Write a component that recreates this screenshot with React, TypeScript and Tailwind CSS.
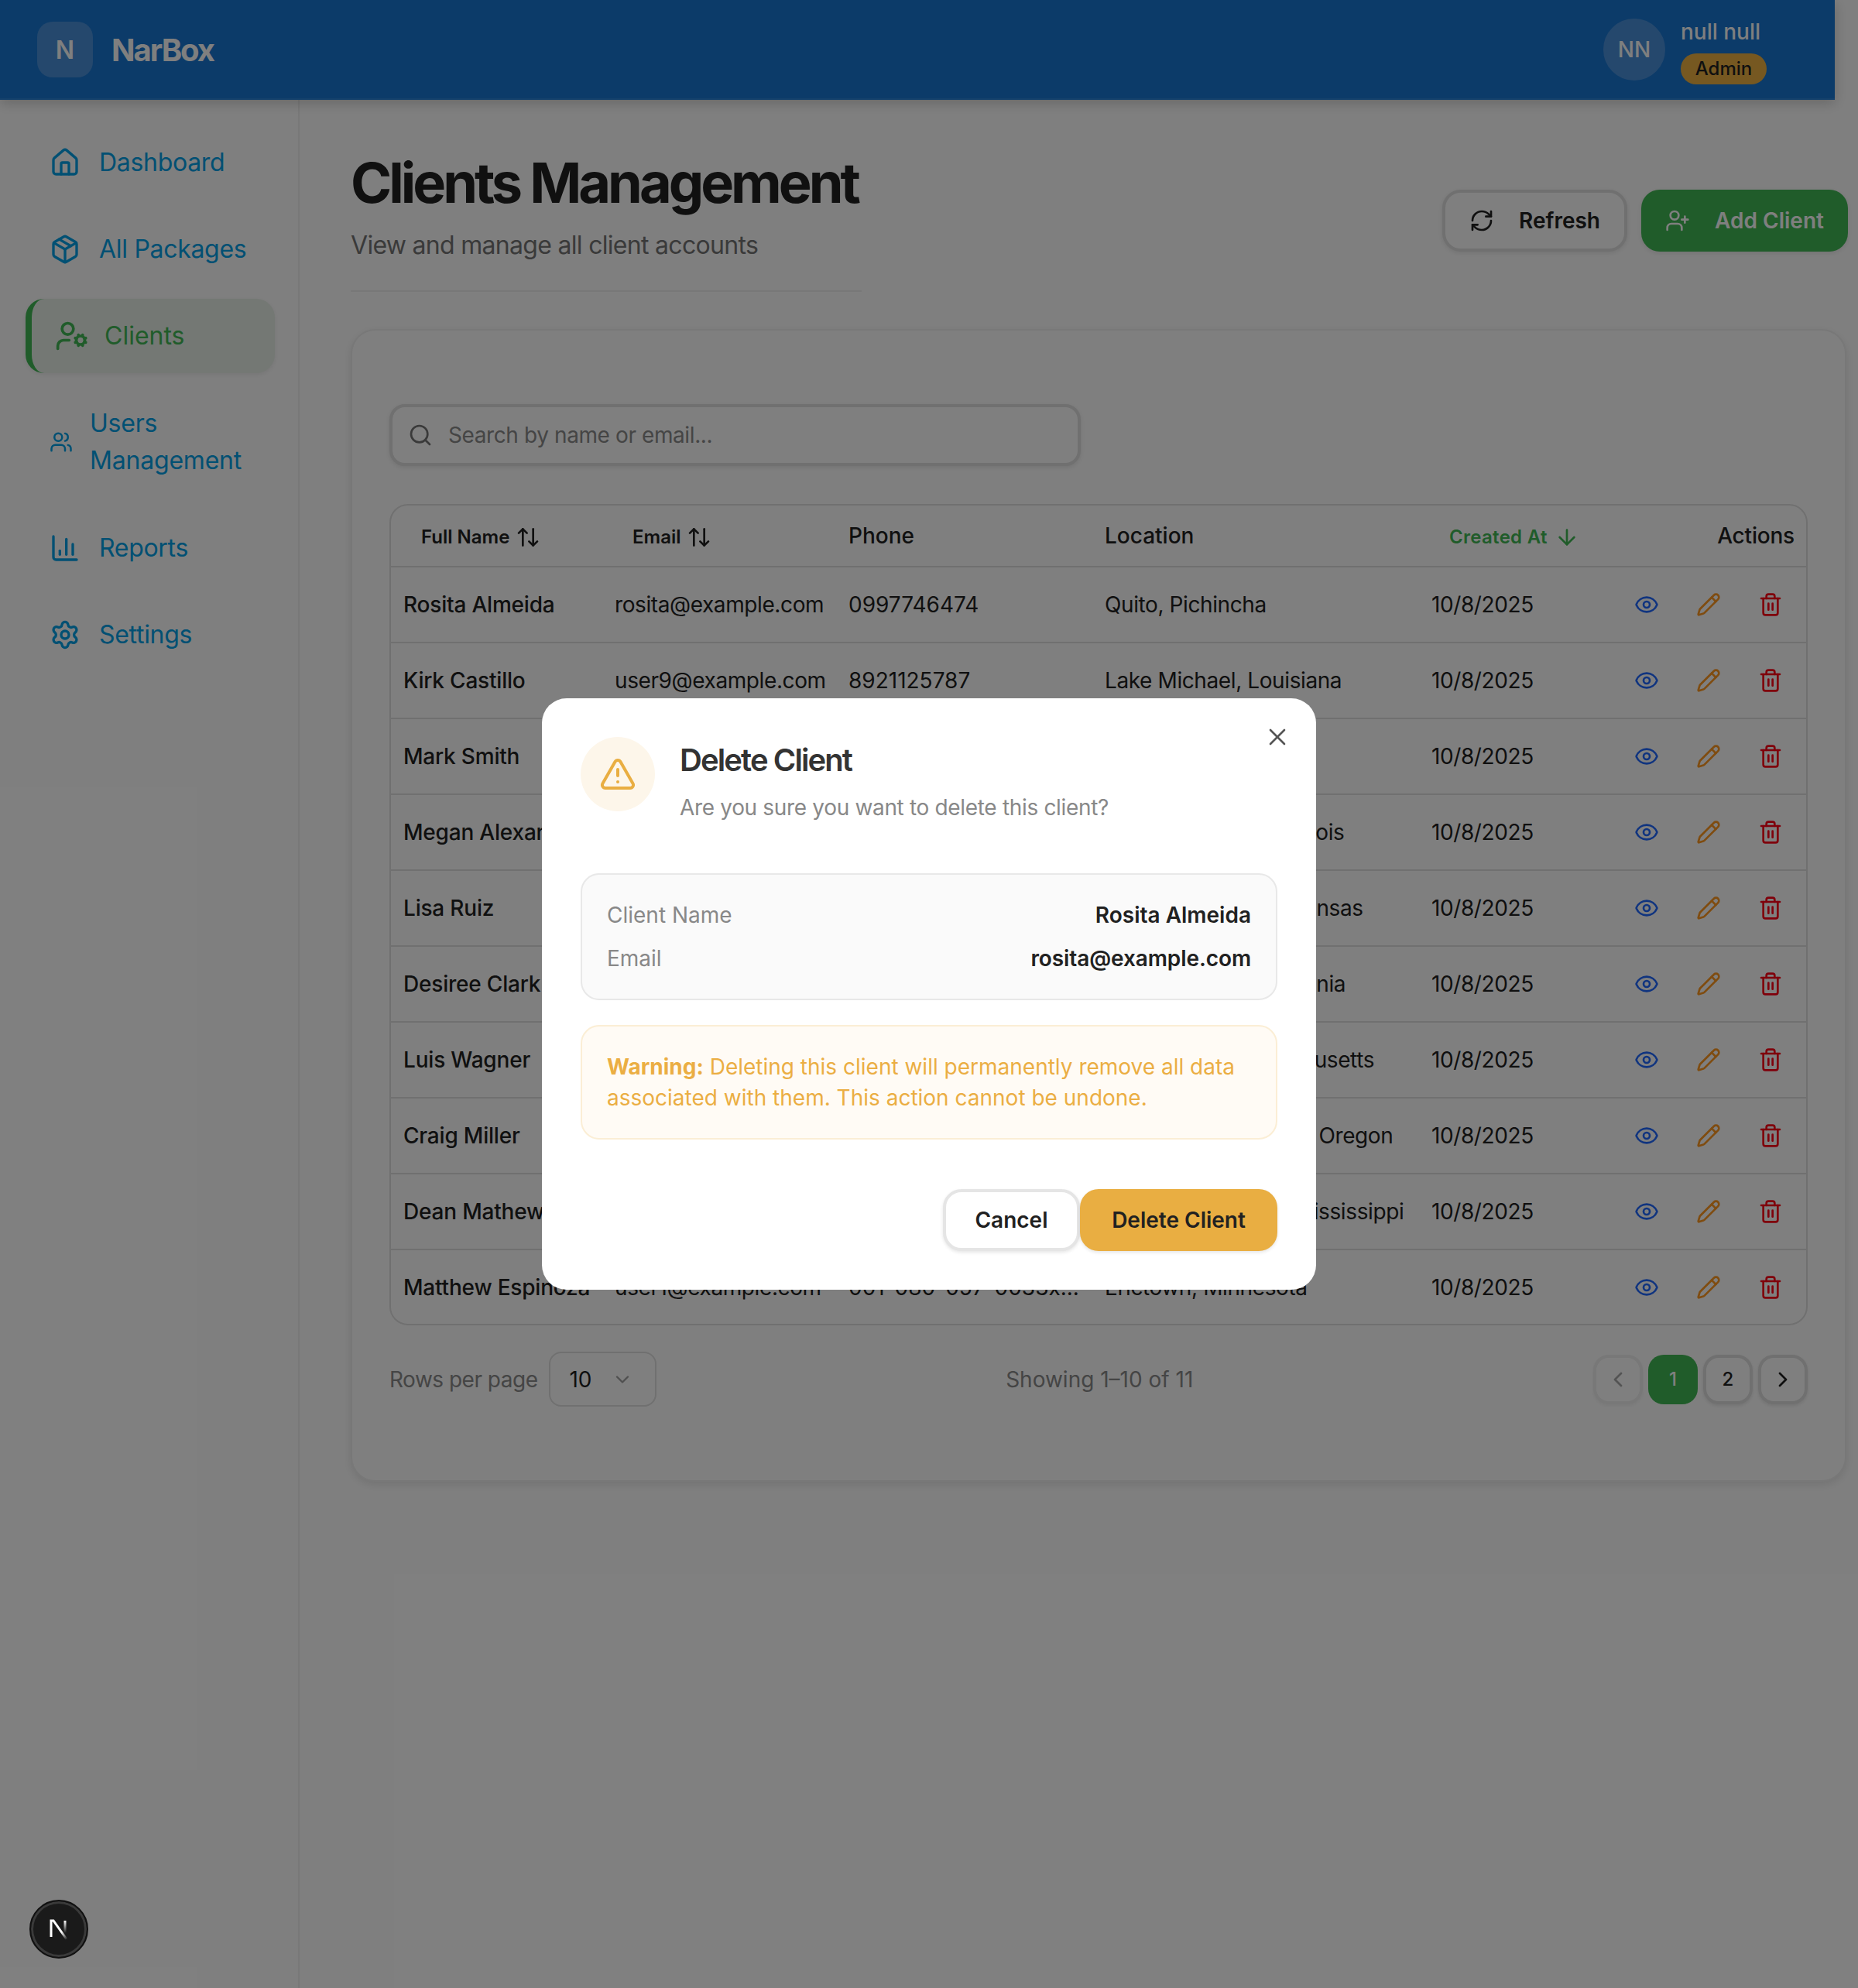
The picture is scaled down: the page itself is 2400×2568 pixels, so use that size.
import { House, Package, UserCog, Users, ChartColumn, Settings, RefreshCw, UserPlus, Search, ArrowUpDown, ArrowDown, Eye, Pencil, Trash2, TriangleAlert, X, ChevronDown, ChevronLeft, ChevronRight } from "lucide-react";

const rows = [
  ["Rosita Almeida", "rosita@example.com", "0997746474", "Quito, Pichincha"],
  ["Kirk Castillo", "user9@example.com", "8921125787", "Lake Michael, Louisiana"],
  ["Mark Smith", "user8@example.com", "5559031142", "Jamesfurt, Ohio"],
  ["Megan Alexander", "user7@example.com", "7274410936", "Port Jeffreytown, Illinois"],
  ["Lisa Ruiz", "user6@example.com", "3182207745", "North Jamesberg, Kansas"],
  ["Desiree Clark", "user5@example.com", "4056128830", "South Aaronton, Virginia"],
  ["Luis Wagner", "user4@example.com", "6172093358", "West Anne, Massachusetts"],
  ["Craig Miller", "user3@example.com", "5034471206", "Lake Christopherton, Oregon"],
  ["Dean Mathews", "user2@example.com", "6018823419", "North Christopher, Mississippi"],
  ["Matthew Espinoza", "user1@example.com", "001-080-057-0033x...", "Erictown, Minnesota"],
];

const nav = [
  { label: "Dashboard", Icon: House },
  { label: "All Packages", Icon: Package },
];
const nav2 = [
  { label: "Reports", Icon: ChartColumn },
  { label: "Settings", Icon: Settings },
];

function NavItem({ label, Icon }: { label: string; Icon: typeof House }) {
  return (
    <div className="flex h-[96px] items-center gap-[24px] pl-[64px] text-[32px] leading-[48px] tracking-[-0.3px] text-[#02a0e6]">
      <Icon className="size-[40px] shrink-0" strokeWidth={2} />
      <span>{label}</span>
    </div>
  );
}

function SortHead({ label, left }: { label: string; left: string }) {
  return (
    <th className={`${left} text-left align-middle font-semibold`}>
      <span className="inline-flex items-center gap-[8px] text-[24px]">
        {label}
        <ArrowUpDown className="size-[32px]" strokeWidth={2} />
      </span>
    </th>
  );
}

export default function App() {
  return (
    <div className="relative h-[2568px] w-[2400px] overflow-hidden bg-white font-['Inter',sans-serif] text-[#212121]">
      <header className="relative z-10 flex h-[129px] w-[2370px] items-center justify-between border-b-2 border-[#2a82d8] bg-[#1976d2] pl-[48px] pr-[88px] shadow-[0_4px_16px_rgba(0,0,0,0.2)]">
        <div className="flex items-center gap-[24px]">
          <div className="flex size-[72px] items-center justify-center rounded-[20px] bg-[#4a91db] pt-[2px] text-[32px] font-semibold text-white">N</div>
          <span className="pt-[2px] text-[40px] font-bold tracking-[-2px] text-white">NarBox</span>
        </div>
        <div className="flex items-center gap-[20px]">
          <div className="flex size-[80px] items-center justify-center rounded-full border-4 border-[#4a91db] bg-[#4a91db] text-[28px] font-medium text-white">NN</div>
          <div className="flex w-[111px] flex-col items-start gap-[11px] pt-[5px]">
            <span className="text-[28px] font-medium leading-[34px] whitespace-nowrap text-white">null null</span>
            <span className="flex h-[40px] w-[111px] items-center justify-center rounded-full bg-[#edb142] text-[24px] font-medium text-[#212121]">Admin</span>
          </div>
        </div>
      </header>

      <div className="flex h-[2439px]">
        <aside className="flex w-[387px] shrink-0 flex-col border-r-2 border-[#f0f0f0] pt-[33px]">
          <div className="flex flex-col gap-[16px]">
            {nav.map((n) => <NavItem key={n.label} {...n} />)}
            <div className="ml-[33px] flex h-[96px] w-[322px] items-center gap-[20px] rounded-[24px] border-l-[8px] border-[#40b854] bg-[#e8f1e8] pl-[30px] text-[32px] text-[#40b854] shadow-[0_2px_6px_rgba(0,0,0,0.08)]">
              <UserCog className="size-[44px] shrink-0" strokeWidth={2} />
              <span>Clients</span>
            </div>
            <div className="flex h-[146px] items-center gap-[22px] pl-[64px] text-[32px] leading-[48px] tracking-[-0.2px] text-[#02a0e6]">
              <Users className="size-[30px] shrink-0" strokeWidth={2} />
              <span className="w-[220px]">Users Management</span>
            </div>
            {nav2.map((n) => <NavItem key={n.label} {...n} />)}
          </div>
        </aside>

        <main className="flex min-w-0 flex-1 flex-col pl-[66px]">
          <div className="flex h-[296px] items-start justify-between pr-[13px]">
            <div className="mt-[63px] w-[660px]">
              <h1 className="text-[72px] leading-[88px] font-bold tracking-[-4px] whitespace-nowrap text-[#212121]">Clients Management</h1>
              <p className="mt-[13px] text-[32px] leading-[48px] tracking-[-0.7px] text-[#757575]">View and manage all client accounts</p>
              <div className="mt-[34px] h-[2px] bg-[#f0f0f0]" />
            </div>
            <div className="mt-[116px] flex gap-[18px]">
              <button className="flex h-[80px] w-[239px] items-center justify-center gap-[32px] rounded-[24px] border-4 border-[#e0e0e0] bg-white text-[28px] font-semibold text-[#212121] shadow-[0_2px_6px_rgba(0,0,0,0.1)]">
                <RefreshCw className="size-[32px]" strokeWidth={2} />Refresh
              </button>
              <button className="flex h-[80px] w-[267px] items-center justify-center gap-[32px] rounded-[24px] bg-[#40b854] text-[28px] font-semibold text-white shadow-[0_2px_6px_rgba(0,0,0,0.1)]">
                <UserPlus className="size-[32px]" strokeWidth={2} />Add Client
              </button>
            </div>
          </div>

          <section className="h-[1489px] w-[1932px] rounded-[32px] border-2 border-[#f0f0f0] bg-white px-[48px] pt-[95px] shadow-[0_4px_12px_rgba(0,0,0,0.1)]">
            <div className="flex h-[80px] w-[893px] items-center gap-[20px] rounded-[20px] border-4 border-[#e0e0e0] bg-white px-[20px] shadow-[0_2px_6px_rgba(0,0,0,0.1)]">
              <Search className="size-[32px] text-[#757575]" strokeWidth={2} />
              <span className="text-[28px] tracking-[-0.4px] text-[#8a8a8a]">Search by name or email...</span>
            </div>

            <div className="mt-[49px] w-[1832px] overflow-hidden rounded-[24px] border-2 border-[#e0e0e0]">
              <table className="w-full table-fixed border-collapse text-[28px]">
                <colgroup>
                  <col className="w-[273px]" />
                  <col className="w-[302px]" />
                  <col className="w-[331px]" />
                  <col className="w-[422px]" />
                  <col className="w-[257px]" />
                  <col />
                </colgroup>
                <thead>
                  <tr className="h-[79px] border-b-2 border-[#e0e0e0]">
                    <SortHead label="Full Name" left="pl-[39px]" />
                    <SortHead label="Email" left="pl-[39px]" />
                    <th className="pl-[16px] text-left font-medium">Phone</th>
                    <th className="pl-[16px] text-left font-medium">Location</th>
                    <th className="pl-[39px] text-left font-semibold text-[#40b854]">
                      <span className="inline-flex items-center gap-[9px] text-[24px] tracking-[0.3px]">Created At<ArrowDown className="size-[32px]" strokeWidth={2} /></span>
                    </th>
                    <th className="pr-[15px] text-right font-medium tracking-[-0.2px]">Actions</th>
                  </tr>
                </thead>
                <tbody>
                  {rows.map((r) => (
                    <tr key={r[0]} className="h-[98px] border-b-2 border-[#e0e0e0] last:h-[96px] last:border-b-0">
                      <td className="truncate pl-[16px] font-medium tracking-[-0.2px]">{r[0]}</td>
                      <td className="truncate pl-[16px] tracking-[-0.4px]">{r[1]}</td>
                      <td className="truncate pl-[16px]">{r[2]}</td>
                      <td className="truncate pl-[16px] tracking-[-0.4px]">{r[3]}</td>
                      <td className="pl-[16px] tracking-[-0.4px]">10/8/2025</td>
                      <td>
                        <div className="flex items-center justify-end gap-[48px] pr-[30px]">
                          <Eye className="size-[32px] text-[#2068ff]" strokeWidth={2} />
                          <Pencil className="size-[32px] text-[#ff9820]" strokeWidth={2} />
                          <Trash2 className="size-[32px] text-[#ff0016]" strokeWidth={2} />
                        </div>
                      </td>
                    </tr>
                  ))}
                </tbody>
              </table>
            </div>

            <div className="mt-[34px] flex h-[71px] items-center justify-between">
              <div className="flex items-center gap-[15px]">
                <span className="text-[28px] tracking-[-0.5px] text-[#8a8a8a]">Rows per page</span>
                <div className="flex h-[71px] w-[139px] items-center justify-between rounded-[16px] border-2 border-[#e0e0e0] pl-[24px] pr-[28px] text-[28px]">
                  10<ChevronDown className="size-[28px] text-[#a0a0a0]" strokeWidth={2} />
                </div>
              </div>
              <span className="ml-[-66px] text-[28px] text-[#8a8a8a]">Showing 1–10 of 11</span>
              <div className="flex items-center gap-[7px]">
                <div className="flex size-[64px] items-center justify-center rounded-[20px] border-4 border-[#f0f0f0] text-[#a8a8a8] shadow-[0_2px_4px_rgba(0,0,0,0.06)]"><ChevronLeft className="size-[32px]" strokeWidth={2} /></div>
                <div className="flex size-[64px] items-center justify-center rounded-[20px] bg-[#40b854] text-[24px] font-medium text-white">1</div>
                <div className="flex size-[64px] items-center justify-center rounded-[20px] border-4 border-[#e0e0e0] text-[24px] font-medium shadow-[0_2px_4px_rgba(0,0,0,0.1)]">2</div>
                <div className="flex size-[64px] items-center justify-center rounded-[20px] border-4 border-[#e0e0e0] shadow-[0_2px_4px_rgba(0,0,0,0.1)]"><ChevronRight className="size-[32px]" strokeWidth={2} /></div>
              </div>
            </div>
          </section>
        </main>
      </div>

      <div className="absolute inset-0 z-20 flex items-center justify-center bg-black/50">
        <div className="relative h-[764px] w-[1000px] rounded-[32px] bg-white p-[50px] text-[28px]">
          <X className="absolute top-[32px] right-[32px] size-[36px] text-[#555]" strokeWidth={1.75} />
          <div className="flex gap-[32px]">
            <div className="flex size-[96px] shrink-0 items-center justify-center rounded-full bg-[#fdf6ea]">
              <TriangleAlert className="size-[48px] text-[#e9ae42]" strokeWidth={2} />
            </div>
            <div>
              <h2 className="mt-[6px] text-[40px] leading-[48px] font-semibold tracking-[-1.9px] text-[#333]">Delete Client</h2>
              <p className="mt-[16px] text-[28px] leading-[42px] tracking-[-0.33px] text-[#888]">Are you sure you want to delete this client?</p>
            </div>
          </div>
          <div className="mt-[64px] flex h-[164px] flex-col justify-center gap-[16px] rounded-[24px] border-2 border-[#e8e8e8] bg-[#fafafa] px-[32px]">
            <div className="flex h-[40px] items-center justify-between"><span className="text-[#888]">Client Name</span><span className="font-semibold text-[#212121]">Rosita Almeida</span></div>
            <div className="flex h-[40px] items-center justify-between"><span className="text-[#888]">Email</span><span className="font-semibold tracking-[-0.1px] text-[#212121]">rosita@example.com</span></div>
          </div>
          <div className="mt-[32px] flex h-[148px] items-center rounded-[24px] border-2 border-[#fbeed5] bg-[#fffbf5] px-[32px] text-[28px] leading-[40px] text-[#ebae43]">
            <p><b className="font-bold">Warning:</b> Deleting this client will permanently remove all data associated with them. This action cannot be undone.</p>
          </div>
          <div className="mt-[64px] flex justify-end">
            <button className="h-[80px] w-[177px] rounded-[24px] border-4 border-[#e5e5e5] bg-white text-[28px] font-semibold text-[#212121] shadow-[0_2px_4px_rgba(0,0,0,0.1)]">Cancel</button>
            <button className="h-[80px] w-[255px] rounded-[24px] bg-[#e9ae42] text-[28px] font-semibold text-[#212121] shadow-[0_2px_4px_rgba(0,0,0,0.1)]">Delete Client</button>
          </div>
        </div>
      </div>

      <div className="absolute bottom-[38px] left-[38px] z-30 flex size-[76px] items-center justify-center rounded-full border-2 border-[#111] bg-[#1a1a1a] shadow-[inset_0_0_0_3px_#3a3a3a]">
        <svg width="30" height="30" viewBox="0 0 30 30" fill="none">
          <defs>
            <linearGradient id="nd" x1="8" y1="4" x2="26" y2="28" gradientUnits="userSpaceOnUse">
              <stop offset="0.6" stopColor="#fff" />
              <stop offset="1" stopColor="#fff" stopOpacity="0" />
            </linearGradient>
            <linearGradient id="nv" x1="23" y1="4" x2="23" y2="20" gradientUnits="userSpaceOnUse">
              <stop stopColor="#fff" />
              <stop offset="1" stopColor="#fff" stopOpacity="0" />
            </linearGradient>
          </defs>
          <path d="M5 25V4h3l17 24" stroke="url(#nd)" strokeWidth="3" />
          <path d="M23 4v18" stroke="url(#nv)" strokeWidth="3" />
        </svg>
      </div>
    </div>
  );
}
